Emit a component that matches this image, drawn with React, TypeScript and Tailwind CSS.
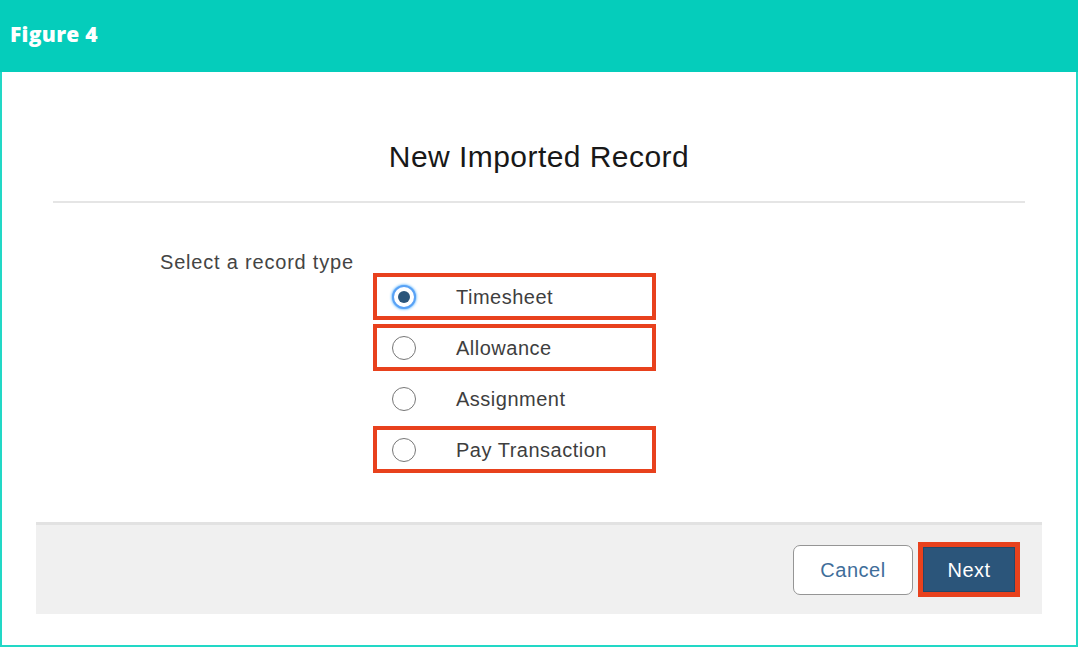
import React from "react"

const RECORD_TYPES = [
  { id: "timesheet", label: "Timesheet", selected: true, highlighted: true },
  { id: "allowance", label: "Allowance", selected: false, highlighted: true },
  { id: "assignment", label: "Assignment", selected: false, highlighted: false },
  { id: "pay_transaction", label: "Pay Transaction", selected: false, highlighted: true },
]

function Radio({ selected }: { selected: boolean }) {
  if (selected) {
    return (
      <span className="w-6 h-6 rounded-full border-2 border-[#5aa2f5] shadow-[0_0_3px_#1b96ff] bg-white flex items-center justify-center">
        <span className="w-[12px] h-[12px] rounded-full bg-[#2b557a]" />
      </span>
    )
  }
  return <span className="w-6 h-6 rounded-full border-[1.5px] border-[#777777] bg-white" />
}

export default function App() {
  return (
    <div
      className="w-[1078px] h-[647px] flex flex-col bg-white"
      style={{ fontFamily: '"Liberation Sans", Arial, sans-serif' }}
    >
      {/* Figure header */}
      <div className="h-[72px] bg-[#05cdbb] flex items-start pl-[10px] pt-[20px]">
        <span
          className="text-white text-[21px] font-extrabold leading-[28px] tracking-[0.3px]"
          style={{ fontFamily: '"Open Sans", sans-serif' }}
        >
          Figure 4
        </span>
      </div>

      {/* Modal body */}
      <div className="flex-1 flex flex-col border-x-2 border-b-2 border-[#22d8c6]">
        <h1 className="pt-[67px] text-center text-[30px] leading-[36px] tracking-[0.45px] text-[#181818]">
          New Imported Record
        </h1>
        <div className="mt-[26px] mx-[51px] h-[2px] bg-[#e5e5e5]" />

        <p className="mt-[48px] pl-[158px] text-[20px] leading-[22px] tracking-[0.8px] text-[#444444]">
          Select a record type
        </p>

        <div className="ml-[371px] w-[283px] flex flex-col gap-[4px]">
          {RECORD_TYPES.map((type) => (
            <div
              key={type.id}
              className={
                type.highlighted
                  ? "h-[47px] border-4 border-[#e8411d] flex items-center pl-[15px] gap-[40px]"
                  : "h-[47px] border-4 border-transparent flex items-center pl-[15px] gap-[40px]"
              }
            >
              <Radio selected={type.selected} />
              <span className="text-[20px] tracking-[0.5px] text-[#3e3e3e]">{type.label}</span>
            </div>
          ))}
        </div>

        {/* Footer */}
        <div className="mt-[49px] mx-[34px] h-[92px] bg-[#f0f0f0] border-t-[3px] border-[#e2e2e2] flex items-center justify-end pr-[22px] gap-[5px]">
          <button className="w-[120px] h-[50px] rounded-[7px] border-[1.5px] border-[#959595] bg-white text-[20px] tracking-[0.5px] text-[#3f6e9a]">
            Cancel
          </button>
          <div className="w-[102px] h-[55px] border-[5px] border-[#e8411d]">
            <button className="w-full h-full bg-[#2b557a] border border-[#22486a] text-white text-[20px] font-medium tracking-[0.5px]">
              Next
            </button>
          </div>
        </div>
      </div>
    </div>
  )
}
